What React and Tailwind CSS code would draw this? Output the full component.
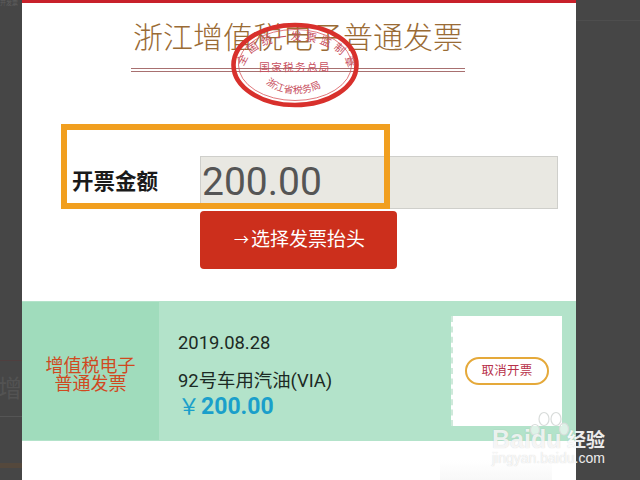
const sans = 'font-["Roboto","Noto_Sans_CJK_SC",sans-serif]';

function Stamp() {
  return (
    <div className="absolute left-[230px] top-[21px] w-[130px] h-[88px]">
      <svg width="130" height="88" viewBox="0 0 130 88" className="absolute inset-0">
        <ellipse cx="65" cy="44" rx="61.5" ry="40" fill="none" stroke="#d8302c" strokeWidth="4.6" />
        <ellipse cx="65" cy="44" rx="56.5" ry="35.5" fill="none" stroke="#d8555a" strokeWidth="0.8" />
        <path id="stamp-arc" d="M14 46 C20 10 112 10 118 48" fill="none" />
        <path id="stamp-arc-low" d="M36 62 C50 76 82 76 96 62" fill="none" />
        <text fontSize="11" fill="#c85060" fontFamily="Noto Sans CJK SC" letterSpacing="3.4">
          <textPath href="#stamp-arc" startOffset="0">全国统一发票监制章</textPath>
        </text>
        <text x="65" y="50" textAnchor="middle" fontSize="10.5" letterSpacing="1.4" fill="#c85060" fontFamily="Noto Sans CJK SC">国家税务总局</text>
        <text fontSize="9.8" fill="#c85060" fontFamily="Noto Sans CJK SC">
          <textPath href="#stamp-arc-low" startOffset="0">浙江省税务局</textPath>
        </text>
      </svg>
    </div>
  );
}

function Watermark() {
  return (
    <div className="absolute left-[492px] top-[408px] w-[130px] h-[60px] text-white/80 [text-shadow:0_0_1px_rgba(90,90,90,0.3)]">
      <svg width="42" height="28" viewBox="0 0 42 28" className="absolute left-[37px] top-[3px]" fill="rgba(255,255,255,0.55)" stroke="#d8dcda" strokeWidth="1.2">
        <ellipse cx="6" cy="19" rx="4.5" ry="5.5" />
        <ellipse cx="15" cy="8" rx="5" ry="6.5" />
        <ellipse cx="27" cy="8" rx="5" ry="6.5" />
        <ellipse cx="35" cy="18" rx="4.5" ry="6" />
      </svg>
      <div className="absolute left-0 top-[17px] font-['Liberation_Sans'] font-bold text-[25px] leading-[28px]">Baidu</div>
      <div className="absolute left-[75px] top-[18px] font-['Noto_Sans_CJK_SC'] font-bold text-[19px] leading-[26px] text-white/90">经验</div>
      <div className="absolute left-0 top-[42px] font-['Liberation_Sans'] text-[14px] leading-[16px] whitespace-nowrap">jingyan.baidu<span className="text-white/90">.com</span></div>
    </div>
  );
}

export default function App() {
  return (
    <div className={`relative w-[640px] h-[480px] overflow-hidden bg-[#464646] flex ${sans}`}>
      {/* page behind the dialog, mostly hidden */}
      <div className="w-[22px] h-full shrink-0 overflow-hidden flex flex-col">
        <div className="h-[6px] text-[6px] leading-[6px] text-[#5e5e5e] whitespace-nowrap">开发票</div>
        <div className="h-[354px]" />
        <div className="h-[1px] bg-[#503f3f]" />
        <div className="h-[55px] flex items-center text-[24px] text-[#535353] whitespace-nowrap justify-end">江增</div>
        <div className="h-[1px] bg-[#555555]" />
        <div className="h-[46px]" />
        <div className="h-[5px] bg-[#54483c]" />
      </div>

      <div className="relative w-[554px] h-full shrink-0 bg-white flex flex-col">
        <div className="h-[3px] bg-[#c8202a]" />
        <h1 className="mt-[15px] h-[40px] ml-[111px] text-left text-[30px] leading-[40px] font-light text-[#9a6b35] whitespace-nowrap">浙江增值税电子普通发票</h1>
        <div className="mt-[10px] ml-[109px] mr-[111px] h-[4px] border-y border-[#a87070]" />

        <div className="mt-[84px] flex pl-[50px] pr-[18px] items-stretch">
          <div className="w-[128px] flex items-center text-[21.5px] font-bold text-[#1a1a1a]">开票金额</div>
          <div className="flex-1 h-[53px] bg-[#e9e8e2] border border-[#cfcfcb] pl-[1px] text-[39px] leading-[51px] text-[#555555]">200.00</div>
        </div>
        <div className="mt-[2px] ml-[178px] w-[197px] h-[58px] rounded bg-[#cc2f1c] flex items-center justify-center text-white text-[19px]">
          <span className="text-[15px] w-[19px] text-center">→</span>选择发票抬头
        </div>

        <div className="mt-[32px] h-[140px] bg-[#b3e3ca] flex">
          <div className="w-[137px] bg-[#a0dcbc] my-[1px] pt-[8px] flex items-center justify-center text-center text-[#d0491f] text-[18px] leading-[18px]">
            增值税电子<br />普通发票
          </div>
          <div className="flex-1 pl-[19px] pt-[31px] text-[#1c2a24]">
            <div className="text-[18.4px] leading-[22px]">2019.08.28</div>
            <div className="mt-[16px] text-[18.4px] leading-[22px]">92号车用汽油(VIA)</div>
            <div className="mt-[2px] text-[#1a9fca] flex items-center">
              <span className="text-[22px] leading-[26px] w-[23px] shrink-0 text-right -ml-[1px]">￥</span>
              <span className="ml-[1px] font-bold text-[23px] leading-[26px]">200.00</span>
            </div>
          </div>
          <div className="mt-[15px] mr-[14px] w-[111px] h-[110px] bg-white border-l-2 border-dashed border-[#cfe9db] pr-[1px] flex items-center justify-center">
            <div className="w-[84px] h-[28px] rounded-full border-2 border-[#e5a93a] flex items-center justify-center text-[12.5px] text-[#b8324a] tracking-[0.3px]">取消开票</div>
          </div>
        </div>

        <div className="mt-[19px] ml-[418px] w-[112px] h-[20px] bg-gradient-to-b from-white to-[#f8f8f8]" />
      </div>

      <div className="flex-1 pt-[20px]">
        <div className="h-[1px] bg-[#4e4e4e]" />
      </div>

      <Stamp />
      {/* orange annotation drawn over the screenshot */}
      <div className="absolute left-[61px] top-[124px] w-[329px] h-[85px] border-[6px] border-[#f19f1f]" />
      <Watermark />
    </div>
  );
}
